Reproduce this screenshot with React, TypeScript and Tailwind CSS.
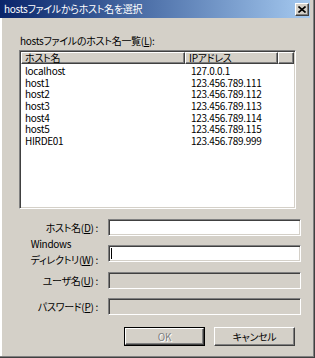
const hosts = [
  { name: "localhost", ip: "127.0.0.1" },
  { name: "host1", ip: "123.456.789.111" },
  { name: "host2", ip: "123.456.789.112" },
  { name: "host3", ip: "123.456.789.113" },
  { name: "host4", ip: "123.456.789.114" },
  { name: "host5", ip: "123.456.789.115" },
  { name: "HIRDE01", ip: "123.456.789.999" },
];

const sunken =
  "border border-t-[#808080] border-l-[#808080] border-b-white border-r-white shadow-[inset_1px_1px_0_#404040,inset_-1px_-1px_0_#d4d0c8]";
const raised =
  "border border-t-white border-l-white border-r-[#404040] border-b-[#404040] shadow-[inset_-1px_-1px_0_#808080]";

function Field({ disabled, caret }: { disabled?: boolean; caret?: boolean }) {
  return (
    <div className={`w-[193px] h-[17px] ${sunken} ${disabled ? "bg-[#d4d0c8]" : "bg-white"} flex items-center pl-[2px]`}>
      {caret && <span className="w-px h-[11px] bg-black" />}
    </div>
  );
}

export default function App() {
  return (
    <div
      className="w-[315px] h-[358px] bg-[#d4d0c8] flex flex-col text-black text-[10px] tracking-[-0.3px] shadow-[inset_-1px_-1px_0_#404040,inset_-2px_-2px_0_#808080,inset_2px_0_0_#ffffff] overflow-hidden"
      style={{ fontFamily: '"Noto Sans CJK JP", sans-serif', fontFeatureSettings: '"palt"' }}
    >
      {/* Title bar */}
      <div className="shrink-0 h-[18px] mr-[5px] bg-linear-to-r from-[#0a246a] to-[#a6caf0] flex items-center justify-between pl-[4px] pr-px">
        <span className="text-white leading-[12px]">hostsファイルからホスト名を選択</span>
        <button className={`w-[14px] h-[13px] bg-[#d4d0c8] ${raised} flex items-center justify-center`}>
          <svg width="8" height="7" viewBox="0 0 8 7">
            <path d="M0.5 0.5 L7.5 6.5 M7.5 0.5 L0.5 6.5" stroke="black" strokeWidth="1.6" />
          </svg>
        </button>
      </div>

      <div className="flex flex-col pl-[19px] shrink-0">
        <div className="mt-[17px] pl-px leading-[12px]">
          hostsファイルのホスト名一覧(<u>L</u>):
        </div>

        {/* List view */}
        <div className={`mt-[3px] w-[277px] h-[159px] bg-white ${sunken} p-px flex flex-col`}>
          <div className="flex h-[12px] shrink-0 bg-[#d4d0c8]">
            <div className={`w-[164px] ${raised} pl-[3px] leading-[10px]`}>ホスト名</div>
            <div className={`w-[93px] ${raised} pl-[3px] leading-[10px]`}>IPアドレス</div>
            <div className={`w-[16px] ${raised}`} />
          </div>
          <div className="flex flex-col pt-px">
            {hosts.map((h) => (
              <div key={h.name} className="flex leading-[11.7px] h-[11.7px]">
                <span className="w-[164px] pl-[4px]">{h.name}</span>
                <span className="pl-[6px]">{h.ip}</span>
              </div>
            ))}
          </div>
        </div>

        {/* Fields */}
        <div className="flex items-center h-[17px] mt-[10px]">
          <div className="w-[79px] text-right leading-[12px]">ホスト名(<u>D</u>) :</div>
          <div className="ml-[10px]"><Field /></div>
        </div>
        <div className="flex items-center h-[17px] mt-[9px]">
          <div className="w-[79px] h-[17px] flex justify-end items-center">
            <div className="leading-[16px] mb-[4px] shrink-0">
              <div>Windows</div>
              <div>ディレクトリ(<u>W</u>) :</div>
            </div>
          </div>
          <div className="ml-[10px]"><Field caret /></div>
        </div>
        <div className="flex items-center h-[17px] mt-[10px]">
          <div className="w-[79px] text-right leading-[12px]">ユーザ名(<u>U</u>) :</div>
          <div className="ml-[10px]"><Field disabled /></div>
        </div>
        <div className="flex items-center h-[17px] mt-[9px]">
          <div className="w-[79px] text-right leading-[12px]">パスワード(<u>P</u>) :</div>
          <div className="ml-[10px]"><Field disabled /></div>
        </div>

        {/* Buttons */}
        <div className="flex mt-[12px] ml-[105px] gap-[9px]">
          <div className="w-[81px] h-[19px] border border-black flex">
            <div className={`flex-1 ${raised} flex items-center justify-center text-[#808080] [text-shadow:1px_1px_0_#ffffff] leading-[12px]`}>
              OK
            </div>
          </div>
          <div className={`w-[81px] h-[19px] ${raised} flex items-center justify-center leading-[12px]`}>
            キャンセル
          </div>
        </div>
      </div>
    </div>
  );
}
